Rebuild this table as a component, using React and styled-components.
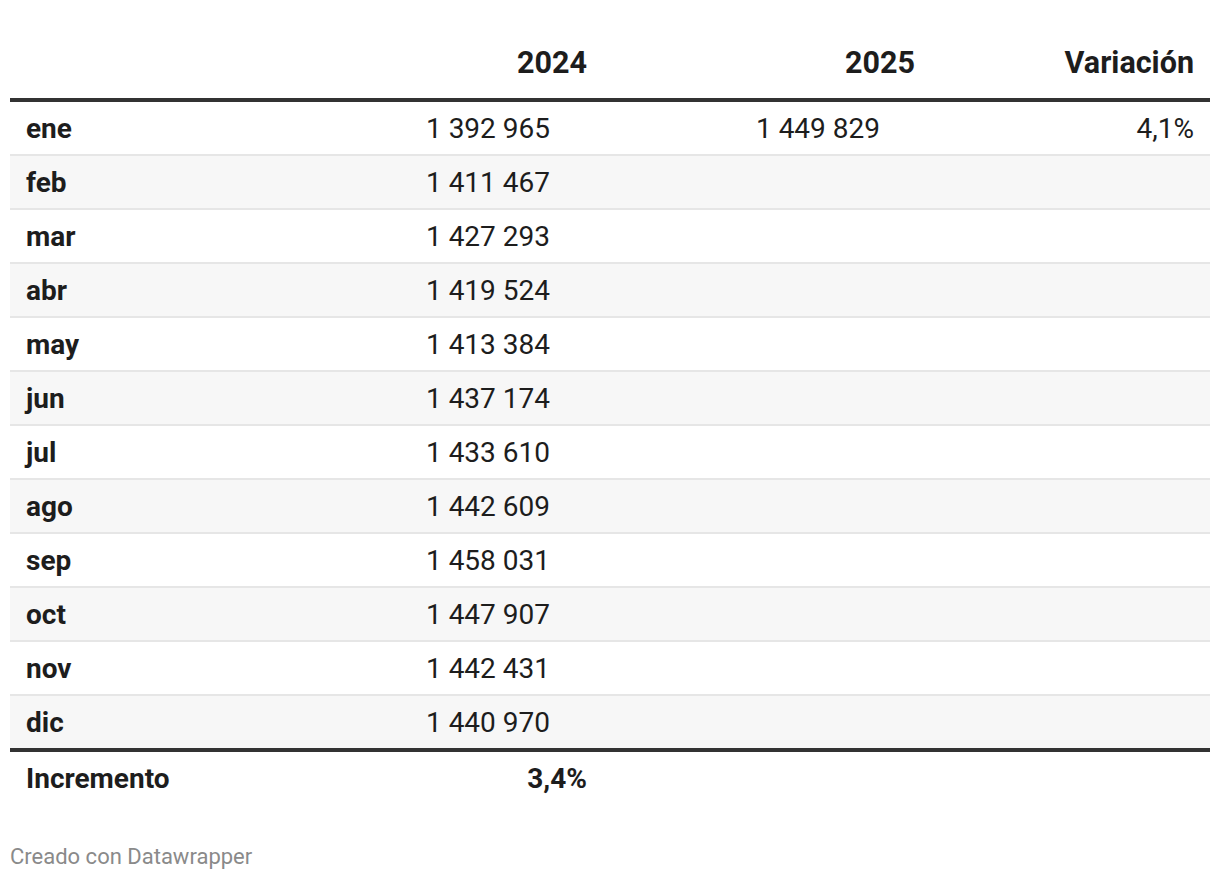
import styled, { createGlobalStyle } from "styled-components";

const months = [
    ["ene", "1 392 965", "1 449 829", "4,1%"],
    ["feb", "1 411 467", "", ""],
    ["mar", "1 427 293", "", ""],
    ["abr", "1 419 524", "", ""],
    ["may", "1 413 384", "", ""],
    ["jun", "1 437 174", "", ""],
    ["jul", "1 433 610", "", ""],
    ["ago", "1 442 609", "", ""],
    ["sep", "1 458 031", "", ""],
    ["oct", "1 447 907", "", ""],
    ["nov", "1 442 431", "", ""],
    ["dic", "1 440 970", "", ""],
];

export default function App(){
    return (
        <>
            <GlobalStyle />
            <Wrapper>
                <Table>
                    <HeaderRow>
                        <HeadCell />
                        <HeadCell>2024</HeadCell>
                        <HeadCell>2025</HeadCell>
                        <HeadCell>Variación</HeadCell>
                    </HeaderRow>
                    {months.map(([m, a, b, v], i) => (
                        <BodyRow key={m} $striped={i % 2 === 1} $last={i === months.length - 1}>
                            <LabelCell>{m}</LabelCell>
                            <NumberCell $inset="53px">{a}</NumberCell>
                            <NumberCell $inset="51px">{b}</NumberCell>
                            <NumberCell>{v}</NumberCell>
                        </BodyRow>
                    ))}
                    <FooterRow>
                        <LabelCell>Incremento</LabelCell>
                        <TotalCell>3,4%</TotalCell>
                        <TotalCell />
                        <TotalCell />
                    </FooterRow>
                </Table>
                <Credit>Creado con Datawrapper</Credit>
            </Wrapper>
        </>
    );
}

const GlobalStyle = createGlobalStyle`
    body {
        margin: 0;
        background: #ffffff;
        font-family: 'Roboto', sans-serif;
        color: #1d1d1d;
    }
`;

const Wrapper = styled.div`
    padding: 28px 10px 0 10px;
    width: 1200px;
`;

const Table = styled.div`
    display: flex;
    flex-direction: column;
    width: 100%;
`;

const columns = `265px 328px 328px 279px`;

const HeaderRow = styled.div`
    display: grid;
    grid-template-columns: ${columns};
    align-items: end;
    height: 70px;
    border-bottom: 4px solid #333333;
`;

const HeadCell = styled.div`
    font-size: 30.5px;
    font-weight: 700;
    text-align: right;
    padding: 0 16px 18px 16px;
    line-height: 34px;
`;

const BodyRow = styled.div`
    display: grid;
    grid-template-columns: ${columns};
    align-items: center;
    height: 52px;
    padding-top: 2px;
    box-sizing: border-box;
    background: ${props => props.$striped ? "#f7f7f7" : "#ffffff"};
    border-bottom: ${props => props.$last ? "4px solid #333333" : "2px solid #e6e6e6"};
    height: ${props => props.$last ? "56px" : "54px"};
`;

const LabelCell = styled.div`
    font-size: 28px;
    font-weight: 700;
    padding: 0 16px;
    line-height: 34px;
`;

const NumberCell = styled.div`
    font-size: 28px;
    font-weight: 400;
    text-align: right;
    padding: 0 ${props => props.$inset || "16px"} 0 16px;
    line-height: 34px;
`;

const FooterRow = styled.div`
    display: grid;
    grid-template-columns: ${columns};
    align-items: center;
    height: 54px;
`;

const TotalCell = styled.div`
    font-size: 28px;
    font-weight: 700;
    text-align: right;
    padding: 0 16px;
    line-height: 34px;
`;

const Credit = styled.div`
    margin-top: 38px;
    font-size: 22px;
    color: #8a8a8a;
`;
